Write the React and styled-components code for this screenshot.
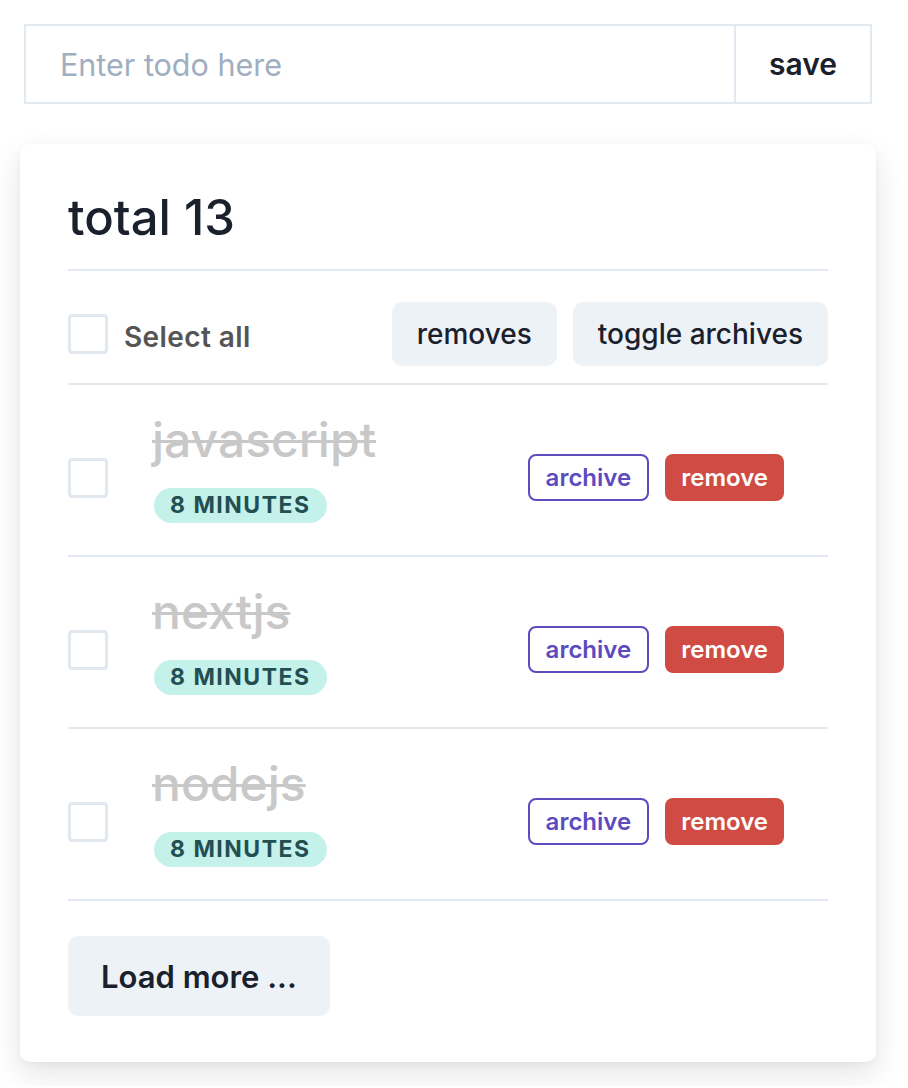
import styled, { createGlobalStyle } from "styled-components";

const GlobalStyle = createGlobalStyle`
  body {
    margin: 0;
    background: #fff;
    font-family: Inter, "Noto Sans", sans-serif;
    color: #1a202c;
  }
  * {
    box-sizing: border-box;
  }
`;

const Page = styled.div`
  padding: 24px 32px 24px 20px;
  width: 908px;
`;

const InputGroup = styled.div`
  display: flex;
  margin: 0 4px;
  height: 80px;
`;

const TodoInput = styled.input`
  flex: 1;
  border: 2px solid #e2e8f0;
  border-right: none;
  padding: 0 34px;
  font-family: inherit;
  font-size: 30.5px;
  color: #1a202c;
  outline: none;
  &::placeholder {
    color: #a0aec0;
  }
`;

const SaveButton = styled.button`
  width: 138px;
  border: 2px solid #e2e8f0;
  background: #fff;
  font-family: inherit;
  font-size: 30px;
  font-weight: 600;
  color: #1a202c;
`;

const Card = styled.div`
  margin-top: 40px;
  background: #fff;
  border-radius: 10px;
  box-shadow: 0 12px 30px rgba(0, 0, 0, 0.11), 0 2px 6px rgba(0, 0, 0, 0.04);
  padding: 46px 48px 46px;
`;

const Title = styled.h2`
  margin: 0;
  font-size: 49px;
  font-weight: 500;
  line-height: 56px;
  padding-bottom: 23px;
  border-bottom: 2px solid #e2e8f0;
`;

const Toolbar = styled.div`
  display: flex;
  align-items: center;
  padding: 31px 0 17px;
  border-bottom: 2px solid #e2e8f0;
`;

const Check = styled.span`
  display: inline-block;
  width: 40px;
  height: 40px;
  border: 3px solid #e2e8f0;
  border-radius: 4px;
  flex-shrink: 0;
`;

const SelectLabel = styled.label`
  display: flex;
  align-items: center;
  gap: 16px;
  font-size: 28px;
  font-weight: 600;
  letter-spacing: 0.4px;
  color: #555;
  margin-right: auto;
  span:last-child {
    padding-top: 6px;
  }
`;

const GrayButton = styled.button`
  border: none;
  background: #edf2f7;
  border-radius: 10px;
  font-family: inherit;
  color: #1a202c;
  font-weight: ${({ $big }) => ($big ? 600 : 500)};
  font-size: ${({ $big }) => ($big ? "31px" : "28px")};
  height: ${({ $big }) => ($big ? "80px" : "64px")};
  padding: ${({ $big }) => ($big ? "0 33px" : "0 25px")};
  margin-left: ${({ $gap }) => $gap || 0}px;
`;

const Row = styled.div`
  display: flex;
  align-items: center;
  height: 172px;
  padding: 15px 44px 0 0;
  border-bottom: 2px solid #e2e8f0;
`;

const Info = styled.div`
  display: flex;
  flex-direction: column;
  align-items: flex-start;
  margin-left: 44px;
  margin-right: auto;
  padding-bottom: 20px;
`;

const TodoText = styled.span`
  font-size: 48px;
  font-weight: 500;
  line-height: 56px;
  color: #c8c8c8;
  text-decoration: line-through;
  text-decoration-thickness: 3px;
`;

const Badge = styled.span`
  margin-top: 20px;
  margin-left: 2px;
  height: 35px;
  line-height: 35px;
  padding: 0 16px;
  border-radius: 18px;
  background: #c4f1e9;
  color: #234e52;
  font-size: 23px;
  font-weight: 700;
  letter-spacing: 1.5px;
  text-transform: uppercase;
`;

const SmallButton = styled.button`
  height: 47px;
  border-radius: 8px;
  padding: 0 16px;
  font-family: inherit;
  font-size: 24px;
  font-weight: 600;
  margin-left: ${({ $gap }) => $gap || 0}px;
  border: ${({ $danger }) => ($danger ? "none" : "2px solid #5b4bbf")};
  background: ${({ $danger }) => ($danger ? "#d14b45" : "#fff")};
  color: ${({ $danger }) => ($danger ? "#fff" : "#5b4bbf")};
`;

const Footer = styled.div`
  padding-top: 35px;
`;

const todos = ["javascript", "nextjs", "nodejs"];

export default function App() {
  return (
    <Page>
      <GlobalStyle />
      <InputGroup>
        <TodoInput placeholder="Enter todo here" />
        <SaveButton>save</SaveButton>
      </InputGroup>
      <Card>
        <Title>total 13</Title>
        <Toolbar>
          <SelectLabel>
            <Check />
            <span>Select all</span>
          </SelectLabel>
          <GrayButton>removes</GrayButton>
          <GrayButton $gap={16}>toggle archives</GrayButton>
        </Toolbar>
        {todos.map((t) => (
          <Row key={t}>
            <Check />
            <Info>
              <TodoText>{t}</TodoText>
              <Badge>8 minutes</Badge>
            </Info>
            <SmallButton>archive</SmallButton>
            <SmallButton $danger $gap={16}>
              remove
            </SmallButton>
          </Row>
        ))}
        <Footer>
          <GrayButton $big>Load more ...</GrayButton>
        </Footer>
      </Card>
    </Page>
  );
}
